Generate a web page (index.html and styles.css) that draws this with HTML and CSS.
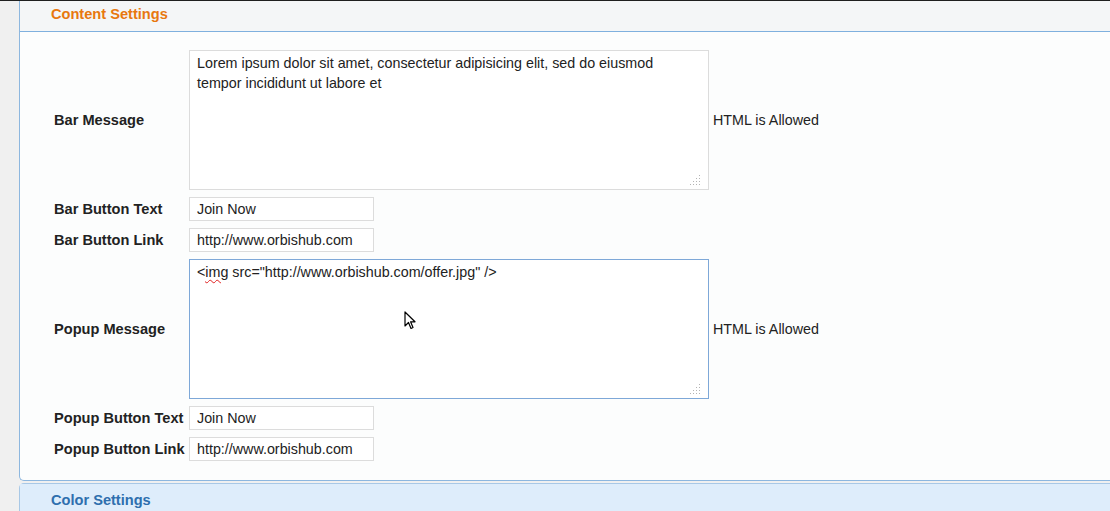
FILE: index.html
```html
<!DOCTYPE html>
<html>
<head>
<meta charset="utf-8">
<link rel="stylesheet" href="styles.css">
</head>
<body>
<div class="topline"></div>
<div class="page">
  <div class="panel content">
    <div class="panel-head"><span class="title orange">Content Settings</span></div>
    <div class="panel-body">
      <div class="form">
        <div class="label">Bar Message</div>
        <div class="field wrap"><textarea class="ta">Lorem ipsum dolor sit amet, consectetur adipisicing elit, sed do eiusmod tempor incididunt ut labore et</textarea><svg class="grip" width="11" height="11" viewBox="0 0 11 11"><g fill="#b4b4b4"><rect x="9" y="0" width="1" height="1"/><rect x="6" y="3" width="1" height="1"/><rect x="9" y="3" width="1" height="1"/><rect x="3" y="6" width="1" height="1"/><rect x="6" y="6" width="1" height="1"/><rect x="9" y="6" width="1" height="1"/><rect x="0" y="9" width="1" height="1"/><rect x="3" y="9" width="1" height="1"/><rect x="6" y="9" width="1" height="1"/><rect x="9" y="9" width="1" height="1"/></g></svg></div>
        <div class="note">HTML is Allowed</div>

        <div class="label">Bar Button Text</div>
        <div class="field"><input class="inp" type="text" value="Join Now"></div>
        <div class="note"></div>

        <div class="label">Bar Button Link</div>
        <div class="field"><input class="inp" type="text" value="http://www.orbishub.com"></div>
        <div class="note"></div>

        <div class="label">Popup Message</div>
        <div class="field wrap"><textarea class="ta focus">&lt;img src="http://www.orbishub.com/offer.jpg" /&gt;</textarea><span class="squiggle">img</span><svg class="grip" width="11" height="11" viewBox="0 0 11 11"><g fill="#b4b4b4"><rect x="9" y="0" width="1" height="1"/><rect x="6" y="3" width="1" height="1"/><rect x="9" y="3" width="1" height="1"/><rect x="3" y="6" width="1" height="1"/><rect x="6" y="6" width="1" height="1"/><rect x="9" y="6" width="1" height="1"/><rect x="0" y="9" width="1" height="1"/><rect x="3" y="9" width="1" height="1"/><rect x="6" y="9" width="1" height="1"/><rect x="9" y="9" width="1" height="1"/></g></svg></div>
        <div class="note">HTML is Allowed</div>

        <div class="label">Popup Button Text</div>
        <div class="field"><input class="inp" type="text" value="Join Now"></div>
        <div class="note"></div>

        <div class="label">Popup Button Link</div>
        <div class="field"><input class="inp" type="text" value="http://www.orbishub.com"></div>
        <div class="note"></div>
      </div>
    </div>
  </div>
  <div class="panel color">
    <div class="panel-head"><span class="title blue">Color Settings</span></div>
  </div>
</div>
<svg class="cursor" width="13" height="20" viewBox="0 0 13 20"><path d="M1 1 L1 15 L4.5 11.5 L7 17.5 L9 16.5 L6.6 10.8 L11 10.8 Z" fill="#fff" stroke="#000" stroke-width="1.2" stroke-linejoin="round"/></svg>
</body>
</html>
```
FILE: styles.css
```css
html, body {
  margin: 0;
  padding: 0;
  overflow: hidden;
}
body {
  width: 1110px;
  height: 511px;
  background: #f0f0f0;
  font-family: "Liberation Sans", Arial, sans-serif;
  color: #222;
  position: relative;
}
.topline {
  height: 1px;
  background: #1f1f1f;
}
.page {
  padding-left: 19px;
}
.panel {
  width: 1120px;
  border: 1px solid #8db7df;
  border-right: none;
  border-radius: 0 0 0 5px;
  background: #fcfdfd;
}
.content {
  border-top: none;
}
.panel-head {
  box-sizing: border-box;
  height: 30px;
  display: flex;
  align-items: center;
  padding-left: 31px;
  padding-bottom: 4px;
  background: #f4f6f7;
  border-bottom: 1px solid #7fb0de;
}
.content .panel-head {
  height: 31px;
}
.title {
  font-size: 14.6px;
  font-weight: bold;
}
.orange { color: #e8780f; }
.blue { color: #2e6fae; }
.panel-body {
  padding: 18px 0 19px 34px;
}
.form {
  display: grid;
  grid-template-columns: 131px 520px auto;
  column-gap: 4px;
  row-gap: 7px;
  align-items: center;
}
.label {
  font-size: 14.6px;
  font-weight: bold;
  white-space: nowrap;
}
.note {
  font-size: 14.3px;
}
.field {
  display: flex;
}
.wrap {
  position: relative;
}
.ta {
  box-sizing: border-box;
  width: 520px;
  height: 140px;
  margin: 0;
  border: 1px solid #dcdcdc;
  background: #fff;
  padding: 2px 7px;
  font-family: "Liberation Sans", Arial, sans-serif;
  font-size: 14.3px;
  line-height: 20px;
  color: #222;
  outline: none;
  resize: none;
}
.ta.focus {
  border-color: #7ea8d8;
}
.grip {
  position: absolute;
  right: 8px;
  bottom: 4px;
}
.squiggle {
  position: absolute;
  left: 16px;
  top: 3px;
  font-size: 14.3px;
  line-height: 20px;
  color: transparent;
  text-decoration: underline wavy #e02020;
  text-decoration-thickness: 1px;
  text-underline-offset: 2px;
  pointer-events: none;
}
.inp {
  box-sizing: border-box;
  width: 185px;
  height: 24px;
  margin: 0;
  border: 1px solid #dcdcdc;
  background: #fff;
  padding: 0 7px;
  font-family: "Liberation Sans", Arial, sans-serif;
  font-size: 14.3px;
  color: #222;
  outline: none;
}
.color {
  margin-top: 2px;
  border-color: #a8c8e6;
  border-radius: 5px 0 0 0;
  background: #deedfb;
}
.color .panel-head {
  background: #deedfb;
  border-bottom: none;
  height: 32px;
  padding-bottom: 0;
}
.cursor {
  position: absolute;
  left: 404px;
  top: 311px;
}
```
